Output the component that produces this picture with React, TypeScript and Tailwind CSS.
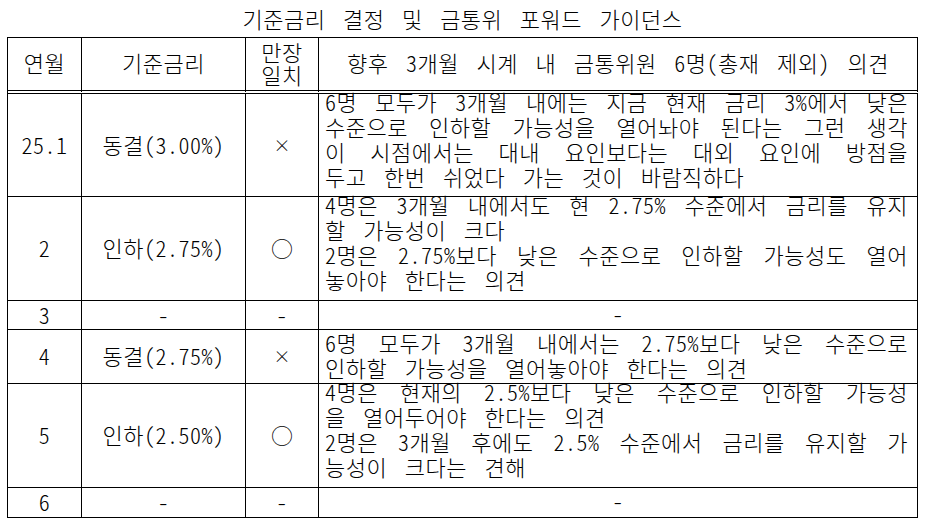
import React from "react";

type Line = { t: string; j?: boolean };

const Cell = ({ children, className = "" }: { children?: React.ReactNode; className?: string }) => (
  <div className={"border-r border-b border-black flex items-center justify-center pb-[2px] " + className}>{children}</div>
);

const TextLines = ({ lines }: { lines: Line[] }) => (
  <>
    {lines.map((l, i) =>
      l.j ? (
        <div key={i} className="whitespace-nowrap text-justify [text-align-last:justify]">
          {l.t}
        </div>
      ) : (
        <div key={i} className="whitespace-nowrap">
          {l.t}
        </div>
      )
    )}
  </>
);

const row1: Line[] = [
  { t: "6명 모두가 3개월 내에는 지금 현재 금리 3%에서 낮은", j: true },
  { t: "수준으로 인하할 가능성을 열어놔야 된다는 그런 생각", j: true },
  { t: "이 시점에서는 대내 요인보다는 대외 요인에 방점을", j: true },
  { t: "두고 한번 쉬었다 가는 것이 바람직하다" },
];
const row2: Line[] = [
  { t: "4명은 3개월 내에서도 현 2.75% 수준에서 금리를 유지", j: true },
  { t: "할 가능성이 크다" },
  { t: "2명은 2.75%보다 낮은 수준으로 인하할 가능성도 열어", j: true },
  { t: "놓아야 한다는 의견" },
];
const row4: Line[] = [
  { t: "6명 모두가 3개월 내에서는 2.75%보다 낮은 수준으로", j: true },
  { t: "인하할 가능성을 열어놓아야 한다는 의견" },
];
const row5: Line[] = [
  { t: "4명은 현재의 2.5%보다 낮은 수준으로 인하할 가능성", j: true },
  { t: "을 열어두어야 한다는 의견" },
  { t: "2명은 3개월 후에도 2.5% 수준에서 금리를 유지할 가", j: true },
  { t: "능성이 크다는 견해" },
];

const head = "h-[56px] border-r border-b-4 border-double border-black flex items-center justify-center pb-[3px]";

export default function App() {
  return (
    <div className="w-[925px] h-[528px] overflow-hidden bg-white text-black font-['Noto_Sans_CJK_KR',sans-serif] [font-feature-settings:'hwid'] font-light text-[22px] tracking-[0.5px] [word-spacing:6px] leading-[25px]">
      <div className="h-[37px] flex items-center justify-center">기준금리 결정 및 금통위 포워드 가이던스</div>
      <div className="ml-[7px] w-[911px] grid grid-cols-[74px_164px_73px_599px] border-l border-t border-black">
        {/* header */}
        <div className={head}>연월</div>
        <div className={head}>기준금리</div>
        <div className={head + " flex-col leading-[23px]"}>
          <div>만장</div>
          <div>일치</div>
        </div>
        <div className={head}>향후 3개월 시계 내 금통위원 6명(총재 제외) 의견</div>

        {/* row 1 */}
        <Cell>25.1</Cell>
        <Cell>동결(3.00%)</Cell>
        <Cell className="text-[17px] tracking-normal">×</Cell>
        <div className="border-r border-b border-black pl-[6px] pr-[9px] pb-[7px]">
          <div className="-mt-[5px]">
            <TextLines lines={row1} />
          </div>
        </div>

        {/* row 2 */}
        <Cell>2</Cell>
        <Cell>인하(2.75%)</Cell>
        <Cell className="text-[22px] tracking-normal">○</Cell>
        <div className="border-r border-b border-black pl-[6px] pr-[9px] pb-[8px]">
          <div className="-mt-[5px]">
            <TextLines lines={row2} />
          </div>
        </div>

        {/* row 3 */}
        <Cell>3</Cell>
        <Cell>-</Cell>
        <Cell>-</Cell>
        <div className="border-r border-b border-black pb-[3px] text-center">-</div>

        {/* row 4 */}
        <Cell>4</Cell>
        <Cell>동결(2.75%)</Cell>
        <Cell className="text-[17px] tracking-normal">×</Cell>
        <div className="border-r border-b border-black pl-[6px] pr-[9px] pb-[3px]">
          <TextLines lines={row4} />
        </div>

        {/* row 5 */}
        <Cell>5</Cell>
        <Cell>인하(2.50%)</Cell>
        <Cell className="text-[22px] tracking-normal">○</Cell>
        <div className="border-r border-b border-black pl-[6px] pr-[9px] pb-[8px]">
          <div className="-mt-[5px]">
            <TextLines lines={row5} />
          </div>
        </div>

        {/* row 6 */}
        <Cell>6</Cell>
        <Cell>-</Cell>
        <Cell>-</Cell>
        <div className="border-r border-b border-black pb-[4px] text-center">-</div>
      </div>
    </div>
  );
}
